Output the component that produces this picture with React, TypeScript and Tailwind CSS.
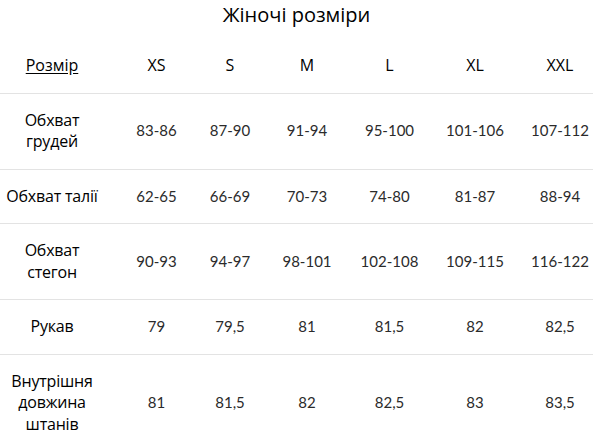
const sizes = ["XS", "S", "M", "L", "XL", "XXL"];

const rows: { label: string[]; values: string[] }[] = [
  { label: ["Обхват", "грудей"], values: ["83-86", "87-90", "91-94", "95-100", "101-106", "107-112"] },
  { label: ["Обхват талії"], values: ["62-65", "66-69", "70-73", "74-80", "81-87", "88-94"] },
  { label: ["Обхват", "стегон"], values: ["90-93", "94-97", "98-101", "102-108", "109-115", "116-122"] },
  { label: ["Рукав"], values: ["79", "79,5", "81", "81,5", "82", "82,5"] },
  { label: ["Внутрішня", "довжина", "штанів"], values: ["81", "81,5", "82", "82,5", "83", "83,5"] },
];

const cellPad = ["", "pl-4", "", "", "", "", "pl-[9px]"];

const grid = "grid grid-cols-[104px_89px_74px_80px_85px_86px_75px] items-center";

export default function App() {
  return (
    <div className="w-[593px] h-[436px] overflow-hidden bg-white text-black font-['Open_Sans',sans-serif]">
      <h1 className="h-[39px] text-center text-[20px] leading-[30px]">Жіночі розміри</h1>

      <div className={`${grid} border-b border-[#e3e3e3] py-4 text-[16px] leading-[21.5px]`}>
        <div className="text-center underline underline-offset-2">Розмір</div>
        {sizes.map((s, i) => (
          <div key={s} className={`text-center ${cellPad[i + 1]}`}>
            {s}
          </div>
        ))}
      </div>

      {rows.map((r) => (
        <div key={r.label.join(" ")} className={`${grid} border-b border-[#e3e3e3] py-4 text-[15px] leading-[21.5px]`}>
          <div className="text-center text-[16px] tracking-[-0.2px]">
            {r.label.map((l) => (
              <div key={l}>{l}</div>
            ))}
          </div>
          {r.values.map((v, i) => (
            <div key={i} className={`text-center text-[#2b2b2b] font-['Lato',sans-serif] ${cellPad[i + 1]}`}>
              {v}
            </div>
          ))}
        </div>
      ))}
    </div>
  );
}
